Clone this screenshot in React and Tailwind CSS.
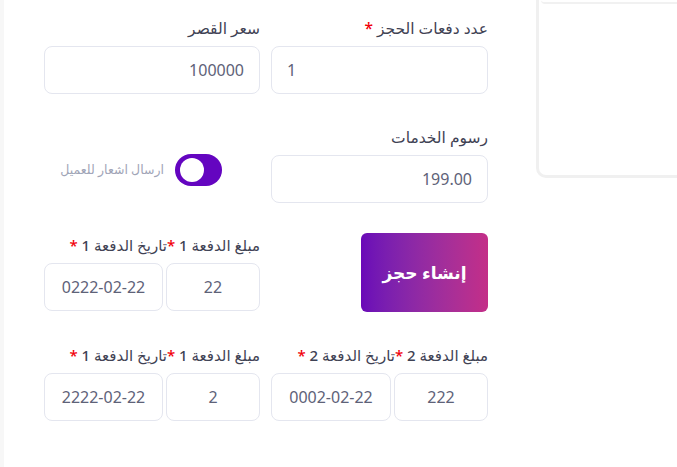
import React from 'react';

const inputCls =
    'h-[48px] min-w-0 rounded-[8px] border border-[#e4e6ef] bg-white px-[15px] text-[16px] text-[#5e6278] outline-none';

function Star() {
    return <span className="text-[#f1000a]">*</span>;
}

function PaymentPair({ n, amount, date }) {
    return (
        <div>
            <label className="mb-[8px] block h-[20px] whitespace-nowrap text-[15px] font-medium leading-[20px] text-[#3f4254]">
                مبلغ الدفعة {n} <Star />تاريخ الدفعة {n} <Star />
            </label>
            <div className="flex gap-[3px]">
                <input className={`${inputCls} w-[94px] shrink-0 text-center`} defaultValue={amount} />
                <input className={`${inputCls} flex-1 text-center`} defaultValue={date} />
            </div>
        </div>
    );
}

export default function App() {
    return (
        <div
            className="flex h-[467px] w-[677px] overflow-hidden bg-white"
            style={{ fontFamily: '"Noto Sans", "DejaVu Sans", sans-serif' }}
        >
            <div className="w-[4px] shrink-0 bg-[#f7f7f7]" />
            <div dir="rtl" className="ml-[40px] grid w-[444px] shrink-0 grid-cols-[217px_216px] content-start gap-x-[11px] pt-[18px]">
                {/* row 1 */}
                <div>
                    <label className="mb-[8px] block h-[20px] text-[15.5px] font-medium leading-[20px] text-[#3f4254]">
                        عدد دفعات الحجز <Star />
                    </label>
                    <input dir="ltr" className={`${inputCls} w-full text-left`} defaultValue="1" />
                </div>
                <div>
                    <label className="mb-[8px] block h-[20px] text-[15.5px] font-medium leading-[20px] text-[#3f4254]">
                        سعر القصر
                    </label>
                    <input className={`${inputCls} w-full`} defaultValue="100000" />
                </div>

                {/* row 2 */}
                <div className="mt-[33px]">
                    <label className="mb-[8px] block h-[20px] text-[15.5px] font-medium leading-[20px] text-[#3f4254]">
                        رسوم الخدمات
                    </label>
                    <input className={`${inputCls} w-full`} defaultValue="199.00" />
                </div>
                <div className="mt-[43px] flex items-center gap-[11px] pr-[38px]">
                    <div className="flex h-[32px] w-[47px] shrink-0 items-center justify-end rounded-full bg-[#6405c0] px-[5px]">
                        <div className="h-[24px] w-[24px] rounded-full bg-white" />
                    </div>
                    <span className="text-[12.5px] text-[#a1a5b7]">ارسال اشعار للعميل</span>
                </div>

                {/* row 3 */}
                <div className="mt-[30px]">
                    <button className="flex h-[79px] w-[127px] items-center justify-center rounded-[6px] bg-gradient-to-l from-[#c42e88] to-[#6a08b8] text-[17px] font-semibold text-white">
                        إنشاء حجز
                    </button>
                </div>
                <div className="mt-[32px]">
                    <PaymentPair n={1} amount="22" date="0222-02-22" />
                </div>

                {/* row 4 */}
                <div className="mt-[33px]">
                    <PaymentPair n={2} amount="222" date="0002-02-22" />
                </div>
                <div className="mt-[33px]">
                    <PaymentPair n={1} amount="2" date="2222-02-22" />
                </div>
            </div>
            <div className="ml-[48px] h-[178px] flex-1 rounded-bl-[10px] border-b-[3px] border-l-[3px] border-[#f0f0f0]">
                <div className="ml-[2px] h-[4px] rounded-bl-[8px] border-b-[2px] border-[#f1f1f1]" />
            </div>
        </div>
    );
}
